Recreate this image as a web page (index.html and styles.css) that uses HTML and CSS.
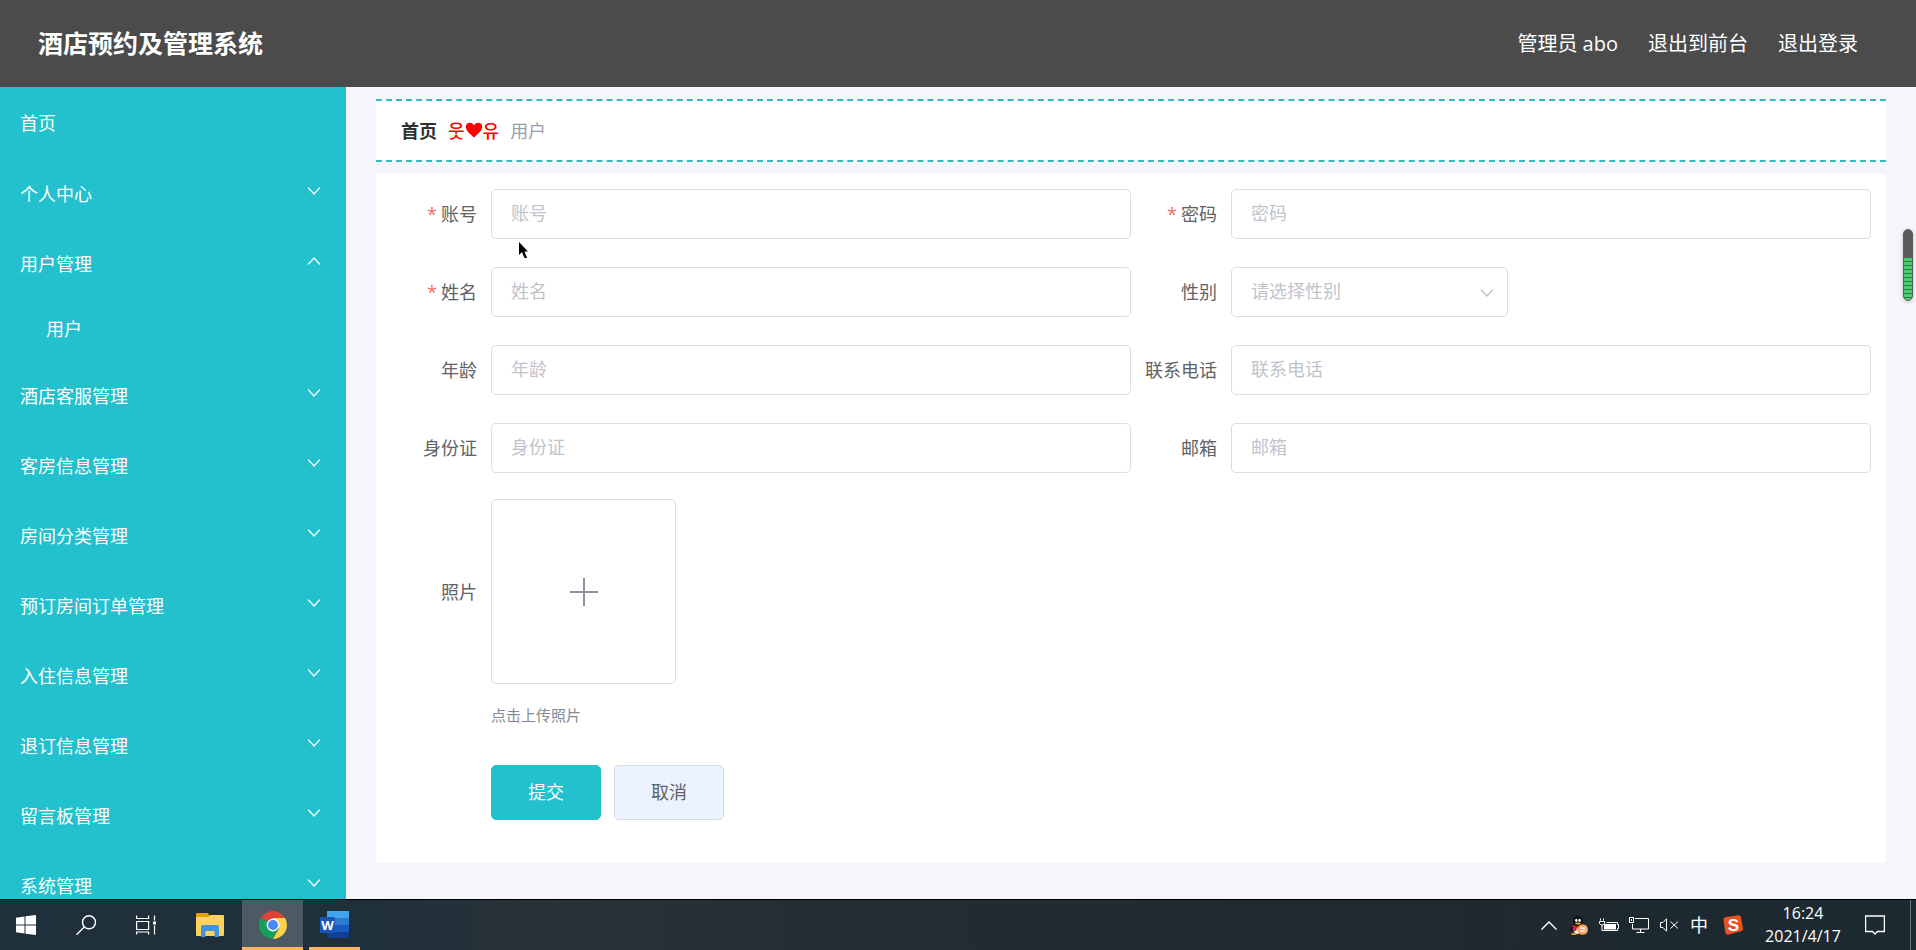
FILE: index.html
```html
<!DOCTYPE html>
<html lang="zh-CN">
<head>
<meta charset="utf-8">
<title>酒店预约及管理系统</title>
<link rel="stylesheet" href="styles.css">
</head>
<body>
<svg class="defs" aria-hidden="true">
  <symbol id="chevron" viewBox="0 0 14 14"><path d="M1.5 4 7 10l5.5-6" fill="none" stroke="currentColor" stroke-width="1.2" stroke-linecap="round" stroke-linejoin="round"/></symbol>
</svg>

<header class="topbar">
  <h1 class="brand">酒店预约及管理系统</h1>
  <nav class="account">
    <span>管理员 abo</span>
    <a href="#">退出到前台</a>
    <a href="#">退出登录</a>
  </nav>
</header>

<div class="workspace">
  <nav class="sidebar">
    <a class="menu-item home" href="#">首页</a>
    <button class="menu-item" type="button">个人中心<svg class="arrow"><use href="#chevron"/></svg></button>
    <button class="menu-item open" type="button">用户管理<svg class="arrow"><use href="#chevron"/></svg></button>
    <a class="menu-item child" href="#">用户</a>
    <button class="menu-item" type="button">酒店客服管理<svg class="arrow"><use href="#chevron"/></svg></button>
    <button class="menu-item" type="button">客房信息管理<svg class="arrow"><use href="#chevron"/></svg></button>
    <button class="menu-item" type="button">房间分类管理<svg class="arrow"><use href="#chevron"/></svg></button>
    <button class="menu-item" type="button">预订房间订单管理<svg class="arrow"><use href="#chevron"/></svg></button>
    <button class="menu-item" type="button">入住信息管理<svg class="arrow"><use href="#chevron"/></svg></button>
    <button class="menu-item" type="button">退订信息管理<svg class="arrow"><use href="#chevron"/></svg></button>
    <button class="menu-item" type="button">留言板管理<svg class="arrow"><use href="#chevron"/></svg></button>
    <button class="menu-item" type="button">系统管理<svg class="arrow"><use href="#chevron"/></svg></button>
  </nav>

  <main class="content">
    <nav class="breadcrumb">
      <a href="#">首页</a>
      <span class="separator">웃<svg viewBox="0 0 18 16"><path d="M9 15.500C5 12 .8 8.800.8 4.800.8 2.300 2.600.8 4.700.8 6.600.8 8.200 1.800 9 3.500 9.800 1.800 11.400.8 13.300.8c2.100 0 3.900 1.500 3.900 4C17.200 8.800 13 12 9 15.500z" fill="#f00"/></svg>유</span>
      <span>用户</span>
    </nav>

    <form class="card">
      <div class="fields">
        <div class="field required"><label for="account">账号</label><input id="account" type="text" placeholder="账号"></div>
        <div class="field required"><label for="password">密码</label><input id="password" type="text" placeholder="密码"></div>
        <div class="field required"><label for="name">姓名</label><input id="name" type="text" placeholder="姓名"></div>
        <div class="field"><label for="gender">性别</label>
          <div class="select"><select id="gender"><option>请选择性别</option><option>男</option><option>女</option></select><svg class="caret"><use href="#chevron"/></svg></div>
        </div>
        <div class="field"><label for="age">年龄</label><input id="age" type="text" placeholder="年龄"></div>
        <div class="field"><label for="phone">联系电话</label><input id="phone" type="text" placeholder="联系电话"></div>
        <div class="field"><label for="idcard">身份证</label><input id="idcard" type="text" placeholder="身份证"></div>
        <div class="field"><label for="email">邮箱</label><input id="email" type="text" placeholder="邮箱"></div>
      </div>
      <div class="field photo"><label for="photo">照片</label>
        <button id="photo" class="upload" type="button" aria-label="上传照片"><svg viewBox="0 0 28 28"><path d="M14 0v28M0 14h28" stroke="#8c939d" stroke-width="2"/></svg></button>
      </div>
      <p class="tip">点击上传照片</p>
      <div class="actions">
        <button class="btn primary" type="button">提交</button>
        <button class="btn" type="button">取消</button>
      </div>
    </form>
  </main>
</div>

<div class="meter" aria-hidden="true"></div>
<svg class="cursor" viewBox="0 0 10 17" aria-hidden="true"><path d="M0 0v13l3-3 2.500 6H8L5.500 9.500H9z"/></svg>

<footer class="taskbar">
  <div class="apps">
    <button class="app start" type="button" aria-label="开始"><svg width="20" height="20" viewBox="0 0 20 20"><path d="M0 2.700 8.500 1.500v8H0zM9.500 1.300 20 0v9.500H9.500zM0 10.500h8.500v8L0 17.300zM9.500 10.500H20V20L9.500 18.700z" fill="#fff"/></svg></button>
    <button class="app search" type="button" aria-label="搜索"><svg width="20" height="20" viewBox="0 0 20 20" fill="none" stroke="#fff" stroke-width="1.400"><circle cx="13" cy="7.300" r="6.500"/><path d="M8.300 12 .5 19.700"/></svg></button>
    <button class="app views" type="button" aria-label="任务视图"><svg width="21" height="20" viewBox="0 0 21 20" fill="none" stroke="#fff" stroke-width="1.200"><path d="M.6.500v3h12v-3M.6 6.500h12v8H.6zM.6 19.500v-2.500h12v2.500M18.500.500v5M18.500 10.500v9"/><path d="M17 6.500h3v3h-3z" fill="#fff" stroke="none"/></svg></button>
    <button class="app files" type="button" aria-label="文件"><svg width="28" height="24" viewBox="0 0 28 24"><path d="M0 1q0-1 1-1h11l1 2v6H0z" fill="#dfa000"/><path d="M0 5q0-1 1-1h11l2-2h13q1 0 1 1v19q0 1-1 1H1q-1 0-1-1z" fill="#fdd35c"/><path d="M5 24V14q0-2 2-2h14q2 0 2 2v10h-4.500v-6h-9v6z" fill="#4095dc"/></svg></button>
    <button class="app chrome" type="button" aria-label="Chrome"><svg width="28" height="28" viewBox="0 0 28 28"><path d="M14 14 1.900 7A14 14 0 0 1 26.100 7z" fill="#dc4437"/><path d="M14 14 1.900 7A14 14 0 0 0 14 28l6-10.500z" fill="#149f5c"/><path d="M14 7h12.100A14 14 0 0 1 14 28l6-10.500z" fill="#fed14a"/><circle cx="14" cy="14" r="6.500" fill="#f4f7fb"/><circle cx="14" cy="14" r="5" fill="#4688f4"/></svg></button>
    <button class="app word" type="button" aria-label="Word"><svg width="29" height="28" viewBox="0 0 29 28"><path d="M7 0h22v7H7z" fill="#41a5ee"/><path d="M7 7h22v7H7z" fill="#2b7cd3"/><path d="M7 14h22v7H7z" fill="#185abd"/><path d="M7 21h22v6H7z" fill="#103f91"/><rect y="6" width="15" height="16" rx="1" fill="#1a55b8"/><text class="logo-w" x="7.500" y="19" text-anchor="middle">W</text></svg></button>
  </div>
  <div class="tray">
    <span class="slot"><svg width="16" height="9" viewBox="0 0 16 9"><path d="m.5 8.500 7.500-7.500 7.500 7.500" fill="none" stroke="#fff" stroke-width="1.400"/></svg></span>
    <span class="slot"><svg width="18" height="19" viewBox="0 0 18 19"><path d="M2 10Q-1 14 1 15l2-2zM12 10l3-1 1 4z" fill="#0b0b0b"/><ellipse cx="8" cy="11.500" rx="5.500" ry="6.500" fill="#0b0b0b"/><ellipse cx="7.500" cy="13" rx="4" ry="5" fill="#fff"/><ellipse cx="8" cy="5.500" rx="5" ry="5.500" fill="#111"/><ellipse cx="6.300" cy="4.300" rx="1.200" ry="1.600" fill="#fff"/><ellipse cx="9.600" cy="4.300" rx="1.200" ry="1.600" fill="#fff"/><ellipse cx="8" cy="7.500" rx="3" ry="1" fill="#f5a623"/><path d="M2.500 9q5.500 3 11 0v2q-4 2-7 1.500V15H4v-3l-2-1z" fill="#d8192b"/><ellipse cx="4" cy="18" rx="3" ry="1" fill="#f5a623"/><circle cx="12.700" cy="13.500" r="5.300" fill="#f9a45a"/><path d="M10 12.200h5.400M10 14.800h5.400" stroke="#fff" stroke-width="1.200"/></svg></span>
    <span class="slot"><svg width="20" height="14" viewBox="0 0 20 14" fill="none" stroke="#fff"><path d="M1.500.500v2M4.500.500v2M.500 3.500h5v2l-1.500 1.500H2L.500 5.500zM3 7v5.500h15.500v-2h1v-4h-1v-2H7.500"/><path d="M5 6h12v5.500H5z" fill="#fff" stroke="none"/></svg></span>
    <span class="slot"><svg width="20" height="17" viewBox="0 0 20 17" fill="none" stroke="#fff"><path d="M6 1.500h13.500v10.500H3.500V7M11.500 12v3.500M7.500 15.500h8M.500.500h4v5h-4zM2.500 2v2"/></svg></span>
    <span class="slot"><svg width="19" height="14" viewBox="0 0 19 14" fill="none" stroke="#fff"><path d="M.500 4.500h2.500L6.500.800v12.400L3 9.500H.500zM10.500 3.500l7.500 7M18 3.500l-7.500 7"/></svg></span>
    <span class="slot ime">中</span>
    <span class="slot sogou"><svg width="22" height="20" viewBox="0 0 22 20"><path d="M1.500 5Q1 2.600 3 2.200L16.500.2q2-.2 2.500 1.800L21 13.500q.400 2-1.600 2.600L6 19.700q-2 .300-2.500-1.700z" fill="#ea5420"/><text class="logo-s" x="11.500" y="16" text-anchor="middle">S</text></svg></span>
    <time class="clock" datetime="2021-04-17T16:24"><span>16:24</span><span>2021/4/17</span></time>
    <button class="notice" type="button" aria-label="通知"><svg width="20" height="21" viewBox="0 0 20 21"><path d="M.600 1h18.800v15.500H12.500L10 19l-2.500-2.500H.600z" fill="none" stroke="#fff" stroke-width="1.300"/></svg></button>
    <span class="desktop-edge"></span>
  </div>
</footer>
</body>
</html>
```
FILE: styles.css
```css
* {
  box-sizing: border-box;
}

body {
  display: flex;
  flex-direction: column;
  height: 100vh;
  margin: 0;
  overflow: hidden;
  background: #f5f6fb;
  font-family: "Open Sans", "Noto Sans CJK SC", sans-serif;
  font-size: 18px;
  font-weight: 400;
}

button,
input,
select {
  font: inherit;
}

a {
  color: inherit;
  text-decoration: none;
}

.defs {
  position: absolute;
  width: 0;
  height: 0;
}

/* Header */
.topbar {
  display: flex;
  flex: none;
  align-items: center;
  justify-content: space-between;
  height: 87px;
  padding: 0 58px 3px 38px;
  background: #4b4b4b;
  color: #fff;
}

.brand {
  margin: 0;
  font-size: 25px;
  font-weight: 700;
}

.account {
  display: flex;
  gap: 30px;
  font-size: 20px;
}

/* Body */
.workspace {
  display: flex;
  flex: 1;
  min-height: 0;
}

.sidebar {
  display: flex;
  flex: none;
  flex-direction: column;
  width: 346px;
  overflow: hidden;
  background: #23c0cd;
  color: #fff;
}

.menu-item {
  display: flex;
  flex: none;
  align-items: center;
  justify-content: space-between;
  height: 70px;
  padding: 0 25px 2px 20px;
  border: 0;
  background: none;
  color: inherit;
  text-align: left;
}

.menu-item.home {
  height: 72px;
}

.menu-item.child {
  height: 62px;
  padding-bottom: 5px;
  padding-left: 46px;
}

.arrow {
  width: 14px;
  height: 14px;
  margin-bottom: 4px;
}

.open .arrow {
  transform: rotate(180deg);
}

.content {
  flex: 1;
  min-width: 0;
  padding: 12px 30px;
}

.breadcrumb {
  display: flex;
  align-items: center;
  gap: 11px;
  height: 63px;
  margin-bottom: 12px;
  padding: 0 25px 2px;
  border: dashed #35b9c0;
  border-width: 2px 0;
  background: #fff;
  color: #999fac;
}

.breadcrumb a {
  color: #303133;
  font-weight: 700;
}

.separator {
  display: flex;
  align-items: center;
  color: #f00;
  font-family: "Noto Sans CJK KR", sans-serif;
  font-weight: 500;
}

.separator svg {
  width: 18px;
  height: 16px;
}

/* Form */
.card {
  padding: 15px 15px 43px;
  background: #fff;
}

.fields {
  display: grid;
  grid-template-columns: 1fr 1fr;
  row-gap: 28px;
}

.field {
  display: flex;
  align-items: center;
}

.field label {
  flex: none;
  width: 100px;
  padding: 0 14px 2px 0;
  color: #606266;
  text-align: right;
}

.required label::before {
  content: "*";
  margin-right: 4px;
  color: #f56c6c;
}

.field input,
.field select {
  width: 100%;
  height: 50px;
  padding: 0 19px 2px;
  border: 1px solid #dcdde2;
  border-radius: 5px;
  outline: 0;
  background: #fff;
}

.field input {
  flex: 1;
  min-width: 0;
}

.field input::placeholder {
  color: #c0c4cc;
  opacity: 1;
}

.select {
  position: relative;
  width: 277px;
}

.field select {
  appearance: none;
  color: #c0c4cc;
}

.caret {
  position: absolute;
  top: 19px;
  right: 14px;
  width: 14px;
  height: 14px;
  color: #bcbfc7;
  pointer-events: none;
}

.photo {
  margin-top: 26px;
}

.upload {
  display: flex;
  align-items: center;
  justify-content: center;
  width: 185px;
  height: 185px;
  border: 1px solid #dcdde2;
  border-radius: 5px;
  background: #fff;
}

.upload svg {
  width: 28px;
  height: 28px;
}

.tip {
  margin: 19px 0 38px 100px;
  color: #858a94;
  font-size: 15px;
  line-height: 24px;
}

.actions {
  display: flex;
  gap: 13px;
  margin-left: 100px;
}

.btn {
  width: 110px;
  height: 55px;
  padding: 0 0 3px;
  border: 1px solid #d6dae2;
  border-radius: 5px;
  background: #eaf3ff;
  color: #606266;
}

.btn.primary {
  border-color: #23c0cd;
  background: #23c0cd;
  color: #fff;
}

/* Overlays */
.meter {
  position: absolute;
  top: 229px;
  right: 3px;
  width: 10px;
  height: 72px;
  border: 1px solid #5b5b5b;
  border-radius: 5px;
  background:
    linear-gradient(#5b5b5b 28px, transparent 28px),
    repeating-linear-gradient(#46d06c 0 3px, #37784a 3px 4px);
  box-shadow: 0 1px 4px rgba(0, 0, 0, 0.2);
}

.cursor {
  position: absolute;
  top: 242px;
  left: 519px;
  width: 10px;
  height: 17px;
}

/* Taskbar */
.taskbar {
  display: flex;
  flex: none;
  justify-content: space-between;
  height: 51px;
  border-top: 1px solid #000;
  background: linear-gradient(90deg, #20303a 0, #20303a 20%, #2a3238 29%, #252c31 45%, #22292e 78%, #1c2930 86%, #1c2a32 100%);
  color: #fff;
}

.apps,
.tray {
  display: flex;
}

.app,
.notice {
  display: flex;
  align-items: center;
  justify-content: center;
  padding: 0;
  border: 0;
  background: none;
}

.start,
.views {
  width: 52px;
}

.search {
  width: 68px;
}

.files {
  width: 64px;
  margin-left: 6px;
}

.chrome {
  width: 61px;
  background: #4e5a63;
}

.word {
  width: 51px;
  margin-left: 6px;
}

.chrome,
.word {
  padding-top: 3px;
  border-bottom: 3px solid #fdb462;
}

.logo-w {
  fill: #fff;
  font: 700 13px "Open Sans", sans-serif;
}

.logo-s {
  fill: #fff;
  font: 700 17px "Liberation Sans", sans-serif;
}

.slot {
  display: flex;
  align-items: center;
  justify-content: center;
  width: 30px;
}

.ime {
  padding-bottom: 2px;
  font-size: 18px;
}

.sogou {
  width: 38px;
}

.clock {
  display: flex;
  flex-direction: column;
  justify-content: center;
  width: 102px;
  padding-bottom: 1px;
  font-size: 16px;
  line-height: 23px;
  text-align: center;
}

.notice {
  width: 42px;
  margin-right: 14px;
}

.desktop-edge {
  width: 6px;
  border-left: 1px solid #6c757b;
}
```
